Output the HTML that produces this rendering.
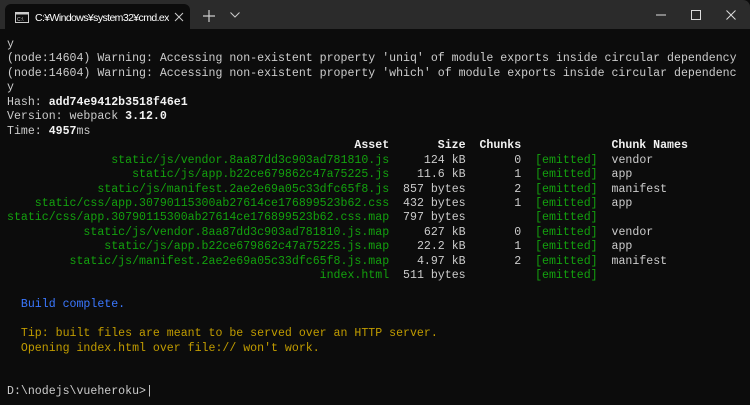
<!DOCTYPE html>
<html><head><meta charset="utf-8"><style>
*{margin:0;padding:0;box-sizing:border-box}
body{width:750px;height:405px;background:#0c0c0c;overflow:hidden;position:relative;font-family:"Liberation Mono",monospace}
#tb{position:absolute;left:0;top:0;width:750px;height:29px;background:#2b2b2b;border-top-right-radius:7px}
#tab{position:absolute;left:5px;top:4px;width:185px;height:26px;background:#0c0c0c;border-radius:6px 6px 0 0}
.tt{position:absolute;left:30px;top:8px;width:134px;overflow:hidden;font:10.5px "Liberation Sans","Noto Sans CJK JP",sans-serif;color:#fff;letter-spacing:-0.6px;white-space:nowrap}
pre{position:absolute;left:7px;top:38px;font-size:11.58px;line-height:14.45px;color:#cccccc;font-family:"Liberation Mono",monospace}
.g{color:#13a10e}.b{color:#3b78ff}.y{color:#c19c00}.w{color:#f2f2f2;font-weight:bold}
</style></head><body>
<div id="tb"></div>
<div id="tab">
<svg style="position:absolute;left:10px;top:8px" width="14" height="11"><rect x="0.5" y="0.5" width="13" height="10" fill="none" stroke="#ccc"/><rect x="0.5" y="0.5" width="13" height="2" fill="#ccc"/><text x="2" y="9" font-size="5" fill="#ccc" font-family="Liberation Sans">C:\</text></svg>
<div class="tt">C:¥Windows¥system32¥cmd.exe</div>
<svg style="position:absolute;left:169px;top:8px" width="10" height="10"><path d="M1 1L9 9M9 1L1 9" stroke="#ccc" stroke-width="1"/></svg>
</div>
<svg style="position:absolute;left:203px;top:10px" width="12" height="12"><path d="M6 0V12M0 6H12" stroke="#ccc" stroke-width="1.2"/></svg>
<svg style="position:absolute;left:230px;top:12px" width="10" height="6"><path d="M0.5 0.5L5 5L9.5 0.5" stroke="#ccc" fill="none"/></svg>
<svg style="position:absolute;left:656px;top:14px" width="11" height="2"><path d="M0 1H10" stroke="#ddd"/></svg>
<svg style="position:absolute;left:691px;top:10px" width="11" height="11"><rect x="0.5" y="0.5" width="9" height="9" fill="none" stroke="#ddd"/></svg>
<svg style="position:absolute;left:726px;top:10px" width="11" height="11"><path d="M0.5 0.5L9.5 9.5M9.5 0.5L0.5 9.5" stroke="#ddd"/></svg>
<pre>y
(node:14604) Warning: Accessing non-existent property 'uniq' of module exports inside circular dependency
(node:14604) Warning: Accessing non-existent property 'which' of module exports inside circular dependenc
y
Hash: <span class="w">add74e9412b3518f46e1</span>
Version: webpack <span class="w">3.12.0</span>
Time: <span class="w">4957</span>ms
<span class="w">                                                  Asset       Size  Chunks             Chunk Names</span>
<span class="g">               static/js/vendor.8aa87dd3c903ad781810.js</span>     124 kB       0  <span class="g">[emitted]</span>  vendor
<span class="g">                  static/js/app.b22ce679862c47a75225.js</span>    11.6 kB       1  <span class="g">[emitted]</span>  app
<span class="g">             static/js/manifest.2ae2e69a05c33dfc65f8.js</span>  857 bytes       2  <span class="g">[emitted]</span>  manifest
<span class="g">    static/css/app.30790115300ab27614ce176899523b62.css</span>  432 bytes       1  <span class="g">[emitted]</span>  app
<span class="g">static/css/app.30790115300ab27614ce176899523b62.css.map</span>  797 bytes          <span class="g">[emitted]</span>
<span class="g">           static/js/vendor.8aa87dd3c903ad781810.js.map</span>     627 kB       0  <span class="g">[emitted]</span>  vendor
<span class="g">              static/js/app.b22ce679862c47a75225.js.map</span>    22.2 kB       1  <span class="g">[emitted]</span>  app
<span class="g">         static/js/manifest.2ae2e69a05c33dfc65f8.js.map</span>    4.97 kB       2  <span class="g">[emitted]</span>  manifest
<span class="g">                                             index.html</span>  511 bytes          <span class="g">[emitted]</span>

<span class="b">  Build complete.</span>

<span class="y">  Tip: built files are meant to be served over an HTTP server.</span>
<span class="y">  Opening index.html over file:// won't work.</span>


D:\nodejs\vueheroku>|</pre>
</body></html>
